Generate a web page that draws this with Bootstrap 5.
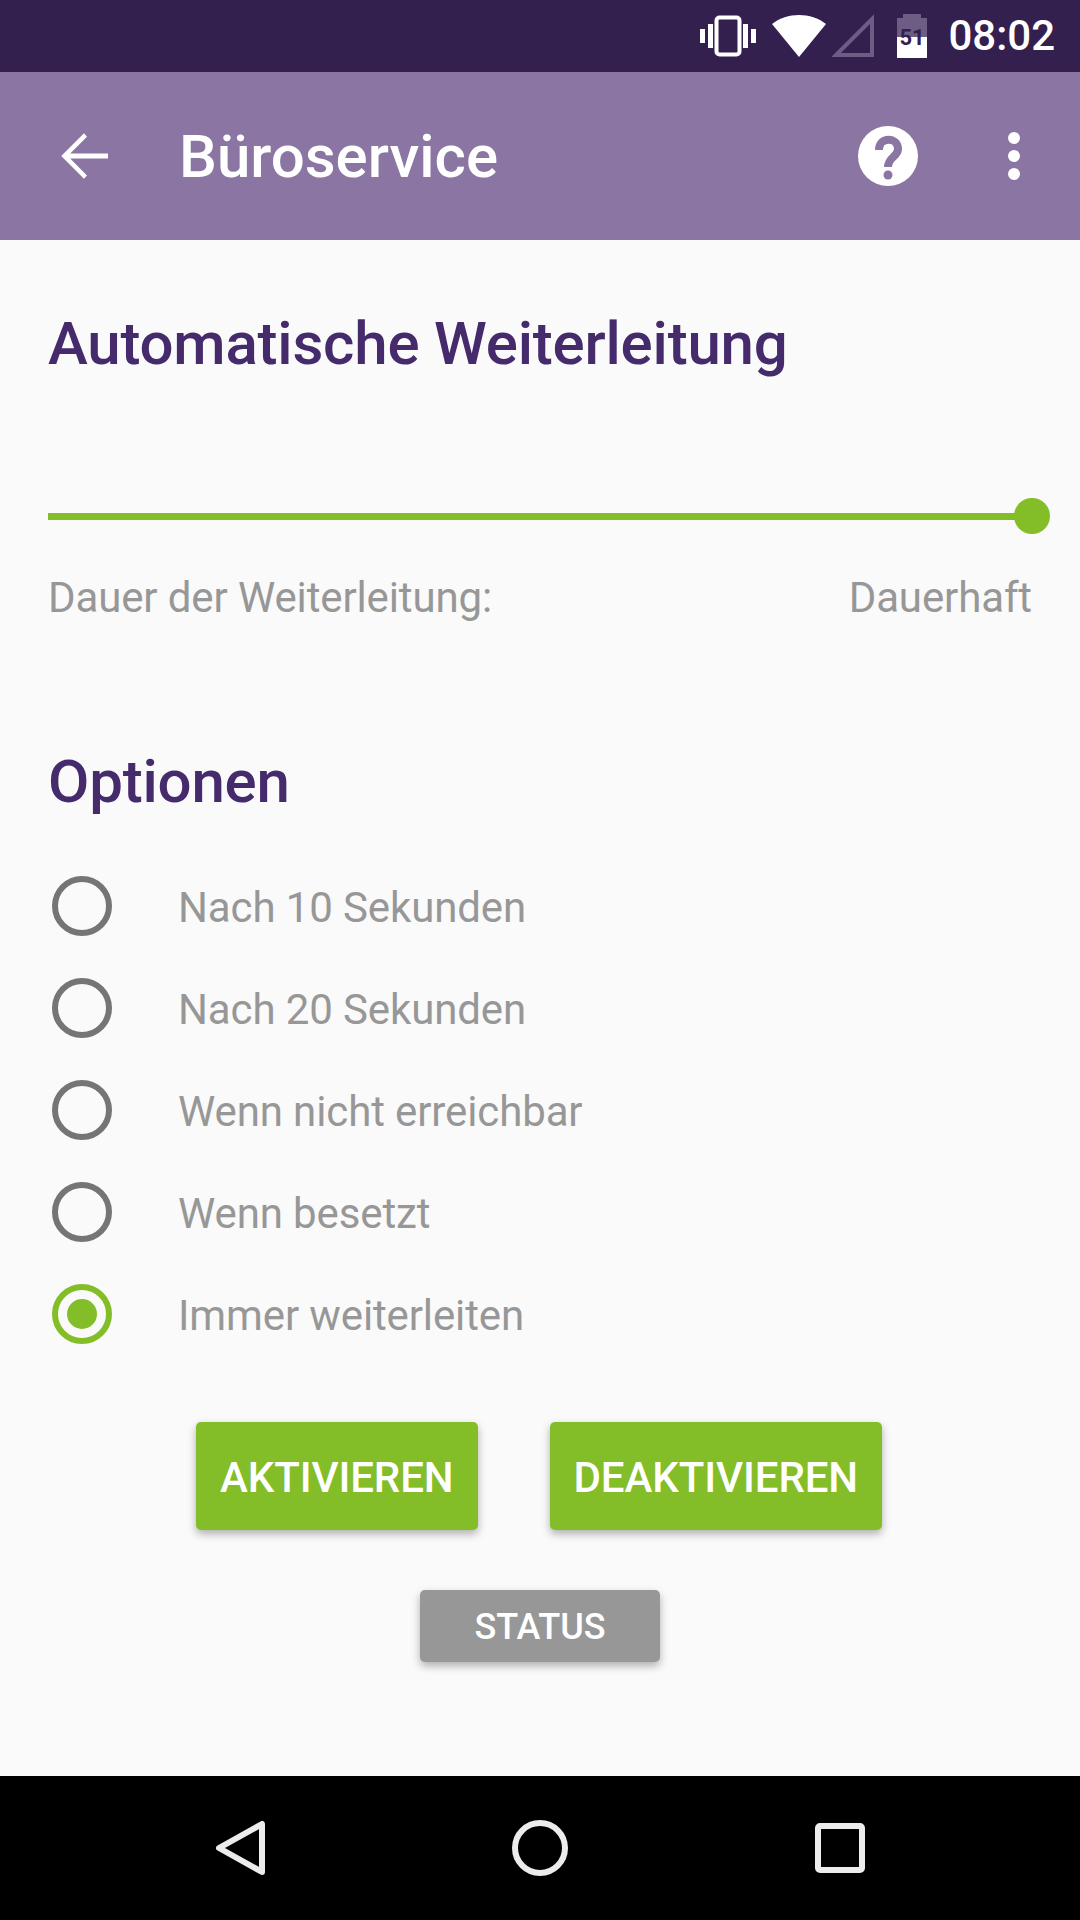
<!DOCTYPE html>
<html lang="de">
<head>
  <meta charset="UTF-8">
  <meta name="viewport" content="width=device-width, initial-scale=1.0">
  <title>Büroservice</title>
  <link href="https://cdn.jsdelivr.net/npm/bootstrap@5.3.2/dist/css/bootstrap.min.css" rel="stylesheet">
  <style>
    body {
      width: 1080px;
      height: 1920px;
      overflow: hidden;
      background-color: #fafafa;
      font-family: Roboto, sans-serif;
    }
    .status-bar {
      height: 72px;
      background-color: #34204f;
      padding-right: 25px;
    }
    .status-time {
      font-size: 42px;
      font-weight: 500;
      line-height: 1;
      margin-left: 21px;
    }
    .signal-icon {
      margin-left: 6px;
    }
    .battery-icon {
      margin-left: 21px;
    }
    .app-bar {
      height: 168px;
      background-color: #8a75a3;
    }
    .app-back {
      margin-left: 60px;
    }
    .app-title {
      margin-left: 71px;
      font-size: 60px;
      font-weight: 500;
      line-height: 1;
      padding-top: 2px;
    }
    .app-help {
      margin-right: 90px;
    }
    .app-more {
      margin-right: 60px;
    }
    .page-body {
      height: 1536px;
      padding: 0 48px;
    }
    .section-title {
      color: #452a6c;
      font-size: 60px;
      font-weight: 500;
      line-height: 66px;
      letter-spacing: -.2px;
      margin: 0;
    }
    .first-title {
      padding-top: 71px;
    }
    .slider-track {
      height: 7px;
      margin-top: 136px;
      background-color: #83bd27;
    }
    .slider-thumb {
      width: 36px;
      height: 36px;
      top: -15px;
      right: -18px;
      border-radius: 50%;
      background-color: #83bd27;
    }
    .duration-row {
      margin-top: 53px;
      color: #979797;
      font-size: 42px;
      line-height: 50px;
      letter-spacing: -.12px;
    }
    .options-title {
      margin-top: 126px;
    }
    .option-list {
      margin-top: 40px;
    }
    .option-row {
      height: 102px;
      color: #979797;
      font-size: 42px;
      letter-spacing: -.12px;
      padding-left: 4px;
      padding-top: 2px;
    }
    .option-dot {
      width: 60px;
      height: 60px;
      flex: none;
      margin-top: -2px;
      margin-right: 66px;
      border: 6px solid #757575;
      border-radius: 50%;
    }
    .option-dot.picked {
      border-color: #83bd27;
    }
    .option-dot.picked::after {
      content: "";
      width: 30px;
      height: 30px;
      border-radius: 50%;
      background-color: #83bd27;
    }
    .action-row {
      margin-top: 57px;
      padding-right: 2px;
      gap: 72px;
    }
    .action-btn {
      height: 108px;
      padding: 2px 24px 0;
      border: 0;
      border-radius: 5px;
      color: #fff;
      background-color: #83bd27;
      font-size: 42px;
      font-weight: 500;
      letter-spacing: -.1px;
      box-shadow: 0 4px 8px rgba(0, 0, 0, .3);
    }
    .status-btn {
      width: 240px;
      height: 72px;
      margin-top: 60px;
      padding: 2px 0 0;
      border: 0;
      border-radius: 5px;
      color: #fff;
      background-color: #979797;
      font-size: 36px;
      font-weight: 500;
      box-shadow: 0 4px 8px rgba(0, 0, 0, .3);
    }
    .nav-bar {
      height: 144px;
      background-color: #000;
      gap: 247px;
    }
  </style>
</head>
<body>
  <div class="status-bar d-flex align-items-center justify-content-end text-white">
    <svg width="56" height="42" viewBox="0 0 56 42" class="me-3" aria-hidden="true">
      <rect x="0" y="14" width="5" height="14" fill="#fff"/>
      <rect x="8" y="9" width="5" height="24" fill="#fff"/>
      <rect x="16.5" y="2.5" width="23" height="37" rx="3" fill="none" stroke="#fff" stroke-width="4"/>
      <rect x="43" y="9" width="5" height="24" fill="#fff"/>
      <rect x="51" y="14" width="5" height="14" fill="#fff"/>
    </svg>
    <svg width="54" height="42" viewBox="0 0 54 42" aria-hidden="true">
      <path d="M0 9 C15 -3 39 -3 54 9 L27 42 Z" fill="#fff"/>
    </svg>
    <svg width="44" height="44" viewBox="0 0 44 44" class="signal-icon" aria-hidden="true">
      <path d="M4 41 L40 5 V41 Z" fill="none" stroke="#6d5c83" stroke-width="4"/>
    </svg>
    <svg width="30" height="44" viewBox="0 0 30 44" class="battery-icon" aria-hidden="true">
      <path d="M6 0 H24 V4 H30 V23 H0 V4 H6 Z" fill="#6d5c83"/>
      <rect x="0" y="23" width="30" height="21" fill="#fff"/>
      <text x="15" y="31" text-anchor="middle" font-family="Roboto, sans-serif" font-size="22" font-weight="700" fill="#34204f">51</text>
    </svg>
    <span class="status-time">08:02</span>
  </div>

  <div class="app-bar d-flex align-items-center text-white">
    <svg width="48" height="48" viewBox="4 4 16 16" class="app-back flex-shrink-0" aria-hidden="true">
      <path d="M20 11.2H7.4l5.6-5.6L12 4.4 4.4 12l7.6 7.6 1-1.1-5.6-5.7H20v-1.6z" fill="#fff"/>
    </svg>
    <span class="app-title">Büroservice</span>
    <svg width="60" height="60" viewBox="0 0 60 60" class="app-help ms-auto" aria-hidden="true">
      <circle cx="30" cy="30" r="30" fill="#fff"/>
      <path d="M21 24 C21 10 40 11 40 23 C40 31 30 31 30 41" fill="none" stroke="#8a75a3" stroke-width="8"/>
      <circle cx="30" cy="49" r="4.5" fill="#8a75a3"/>
    </svg>
    <svg width="12" height="48" viewBox="0 0 12 48" class="app-more" aria-hidden="true">
      <circle cx="6" cy="6" r="6" fill="#fff"/>
      <circle cx="6" cy="24" r="6" fill="#fff"/>
      <circle cx="6" cy="42" r="6" fill="#fff"/>
    </svg>
  </div>

  <main class="page-body">
    <h1 class="section-title first-title">Automatische Weiterleitung</h1>

    <div class="slider-track position-relative">
      <span class="slider-thumb position-absolute"></span>
    </div>
    <div class="duration-row d-flex justify-content-between">
      <span>Dauer der Weiterleitung:</span>
      <span>Dauerhaft</span>
    </div>

    <h2 class="section-title options-title">Optionen</h2>

    <div class="option-list">
      <div class="option-row d-flex align-items-center"><span class="option-dot d-flex align-items-center justify-content-center"></span>Nach 10 Sekunden</div>
      <div class="option-row d-flex align-items-center"><span class="option-dot d-flex align-items-center justify-content-center"></span>Nach 20 Sekunden</div>
      <div class="option-row d-flex align-items-center"><span class="option-dot d-flex align-items-center justify-content-center"></span>Wenn nicht erreichbar</div>
      <div class="option-row d-flex align-items-center"><span class="option-dot d-flex align-items-center justify-content-center"></span>Wenn besetzt</div>
      <div class="option-row d-flex align-items-center"><span class="option-dot picked d-flex align-items-center justify-content-center"></span>Immer weiterleiten</div>
    </div>

    <div class="action-row d-flex justify-content-center">
      <button type="button" class="btn action-btn">AKTIVIEREN</button>
      <button type="button" class="btn action-btn">DEAKTIVIEREN</button>
    </div>
    <div class="d-flex justify-content-center">
      <button type="button" class="btn status-btn">STATUS</button>
    </div>
  </main>

  <div class="nav-bar d-flex align-items-center justify-content-center">
    <svg width="50" height="56" viewBox="0 0 50 56" aria-hidden="true">
      <path d="M47 4 V52 L4 28 Z" fill="none" stroke="#ececec" stroke-width="6" stroke-linejoin="round"/>
    </svg>
    <svg width="56" height="56" viewBox="0 0 56 56" aria-hidden="true">
      <circle cx="28" cy="28" r="25" fill="none" stroke="#ececec" stroke-width="6"/>
    </svg>
    <svg width="50" height="50" viewBox="0 0 50 50" aria-hidden="true">
      <rect x="3" y="3" width="44" height="44" rx="2" fill="none" stroke="#ececec" stroke-width="6"/>
    </svg>
  </div>

  <script src="https://cdn.jsdelivr.net/npm/bootstrap@5.3.2/dist/js/bootstrap.bundle.min.js"></script>
</body>
</html>
